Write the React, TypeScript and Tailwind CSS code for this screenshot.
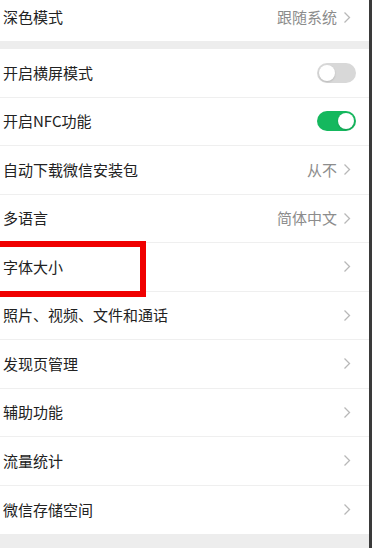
import React from 'react';

type Row = {
  label: string;
  value?: string;
  toggle?: boolean;
  on?: boolean;
};

const rows: Row[] = [
  { label: '开启横屏模式', toggle: true, on: false },
  { label: '开启NFC功能', toggle: true, on: true },
  { label: '自动下载微信安装包', value: '从不' },
  { label: '多语言', value: '简体中文' },
  { label: '字体大小' },
  { label: '照片、视频、文件和通话' },
  { label: '发现页管理' },
  { label: '辅助功能' },
  { label: '流量统计' },
  { label: '微信存储空间' },
];

function Chevron() {
  return (
    <svg width="8" height="13" viewBox="0 0 8 13" className="shrink-0">
      <path d="M1.5 1.5 L6.5 6.5 L1.5 11.5" fill="none" stroke="#b8b8b8" strokeWidth="1.3" />
    </svg>
  );
}

function Toggle({ on }: { on?: boolean }) {
  return (
    <div
      className={
        'w-[39px] h-[20px] rounded-full flex items-center px-[2px] ' +
        (on ? 'bg-[#15b85e] justify-end' : 'bg-[#d8d8d8] justify-start')
      }
    >
      <div className="w-[16px] h-[16px] rounded-full bg-white shadow-[0_1px_2px_rgba(0,0,0,0.15)]" />
    </div>
  );
}

export default function App() {
  return (
    <div
      className="w-[372px] h-[548px] overflow-hidden bg-[#ededed] flex text-[15px] text-[#222222]"
      style={{ fontFamily: '"Noto Sans CJK SC", "Noto Sans", sans-serif' }}
    >
      <div className="flex-1 flex flex-col">
        {/* top row, cut off by the screen edge */}
        <div className="h-[41px] bg-white flex items-center pb-[7px] pl-[3px] pr-[18px]">
          <span className="flex-1">深色模式</span>
          <span className="text-[#8c8c8c] mr-[6px]">跟随系统</span>
          <Chevron />
        </div>

        <div className="h-[8px]" />

        <div className="bg-white flex flex-col">
          {rows.map((row, i) => (
            <div
              key={i}
              className={
                'relative h-[48.5px] flex items-center pl-[3px] ' +
                (row.toggle ? 'pr-[13px] ' : 'pr-[18px] ') +
                (i < rows.length - 1 ? 'border-b border-[#efefef]' : '')
              }
            >
              <span className="flex-1">{row.label}</span>
              {row.value && <span className="text-[#8c8c8c] mr-[6px]">{row.value}</span>}
              {row.toggle ? <Toggle on={row.on} /> : <Chevron />}
              {row.label === '字体大小' && (
                <div className="absolute left-[-10px] top-[-2px] w-[156px] h-[56px] border-[6px] border-[#f00000]" />
              )}
            </div>
          ))}
        </div>
      </div>
      <div className="w-[3px] bg-[#3a3a3a]" />
    </div>
  );
}
